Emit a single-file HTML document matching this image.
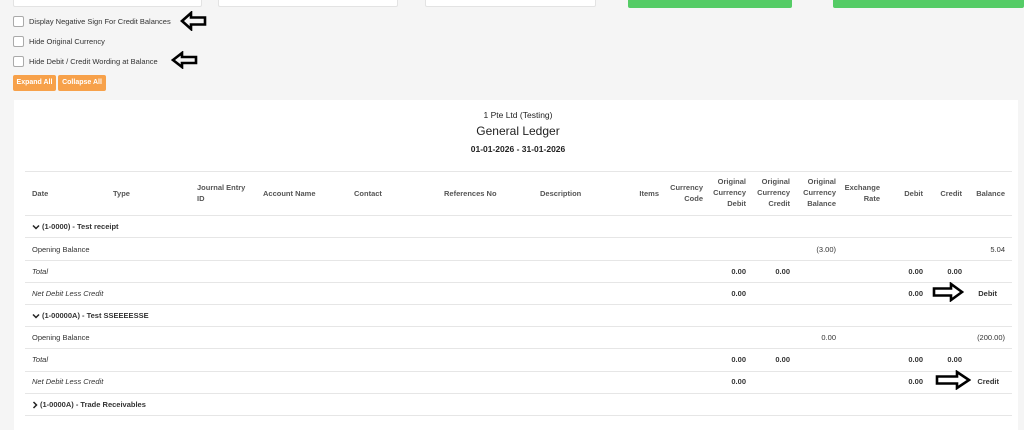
<!DOCTYPE html>
<html><head><meta charset="utf-8"><style>
*{margin:0;padding:0;box-sizing:border-box}
body{width:1024px;height:419px;overflow:hidden;background:#f5f5f5;font-family:"Liberation Sans",sans-serif;font-size:7.5px;color:#333;position:relative}
.a{position:absolute;white-space:nowrap}
.r{position:absolute;width:100px;text-align:right;white-space:nowrap}
.b{font-weight:bold}
.i{font-style:italic}
.h{color:#555;font-weight:bold;line-height:11px}
.ln{position:absolute;left:25px;width:987px;height:1px;background:#e6e6e6}
.cb{position:absolute;left:13px;width:11px;height:11px;border:1px solid #aaa;border-radius:2px;background:#fff}
.btn{position:absolute;top:75px;height:16px;background:#f7a14a;color:#fff;font-size:7px;font-weight:bold;line-height:16px;text-align:center;border-radius:2px}
.chev{display:inline-block;vertical-align:middle;margin-right:2px}
</style></head><body>
<div class="a" style="left:13px;top:-6px;width:189px;height:13px;background:#fff;border:1px solid #e3e3e3;border-radius:2px"></div>
<div class="a" style="left:218px;top:-6px;width:180px;height:13px;background:#fff;border:1px solid #e3e3e3;border-radius:2px"></div>
<div class="a" style="left:425px;top:-6px;width:171px;height:13px;background:#fff;border:1px solid #e3e3e3;border-radius:2px"></div>
<div class="a" style="left:628px;top:-4px;width:164px;height:12px;background:#55cc66;border-radius:2px"></div>
<div class="a" style="left:833px;top:-4px;width:191px;height:12px;background:#55cc66;border-radius:2px"></div>

<div class="cb" style="top:16px"></div><div class="a" style="left:29px;top:17px;font-size:7.5px">Display Negative Sign For Credit Balances</div>
<div class="cb" style="top:36px"></div><div class="a" style="left:29px;top:37px">Hide Original Currency</div>
<div class="cb" style="top:56px"></div><div class="a" style="left:29px;top:57px">Hide Debit / Credit Wording at Balance</div>
<svg class="a" style="left:180px;top:11px" width="27" height="20" viewBox="0 0 27 20"><path d="M2 10 L11 2 L11 6.5 L25 6.5 L25 13.5 L11 13.5 L11 18 Z" fill="none" stroke="#000" stroke-width="2.6"/></svg>
<svg class="a" style="left:171px;top:51px" width="27" height="18" viewBox="0 0 27 18"><path d="M2 9 L11 2 L11 6 L25 6 L25 12 L11 12 L11 16 Z" fill="none" stroke="#000" stroke-width="2.6"/></svg>
<div class="btn" style="left:13px;width:43px">Expand All</div>
<div class="btn" style="left:58px;width:48px">Collapse All</div>

<div class="a" style="left:14px;top:100px;width:1004px;height:330px;background:#fff"></div>
<div class="a" style="left:0;width:1036px;text-align:center;top:110px;font-size:8.5px;color:#222">1 Pte Ltd (Testing)</div>
<div class="a" style="left:0;width:1036px;text-align:center;top:124px;font-size:12px;color:#222">General Ledger</div>
<div class="a" style="left:0;width:1036px;text-align:center;top:144px;font-size:8.5px;color:#222;font-weight:bold">01-01-2026 - 31-01-2026</div>

<div class="ln" style="top:171px"></div>
<div class="a h" style="left:32px;top:188px">Date</div>
<div class="a h" style="left:113px;top:188px">Type</div>
<div class="a h" style="left:197px;top:182px">Journal Entry<br>ID</div>
<div class="a h" style="left:263px;top:188px">Account Name</div>
<div class="a h" style="left:354px;top:188px">Contact</div>
<div class="a h" style="left:444px;top:188px">References No</div>
<div class="a h" style="left:540px;top:188px">Description</div>
<div class="r h" style="left:559px;top:188px">Items</div>
<div class="r h" style="left:603px;top:182px">Currency<br>Code</div>
<div class="r h" style="left:646px;top:176px">Original<br>Currency<br>Debit</div>
<div class="r h" style="left:690px;top:176px">Original<br>Currency<br>Credit</div>
<div class="r h" style="left:736px;top:176px">Original<br>Currency<br>Balance</div>
<div class="r h" style="left:780px;top:182px">Exchange<br>Rate</div>
<div class="r h" style="left:823px;top:188px">Debit</div>
<div class="r h" style="left:862px;top:188px">Credit</div>
<div class="r h" style="left:905px;top:188px">Balance</div>

<div class="ln" style="top:215px"></div>
<div class="a b" style="left:32px;top:222px"><svg class="chev" width="8" height="6" viewBox="0 0 8 6"><path d="M1 1.5 L4 4.5 L7 1.5" fill="none" stroke="#222" stroke-width="1.5"/></svg>(1-0000) - Test receipt</div>
<div class="ln" style="top:237px"></div>
<div class="a" style="left:32px;top:245px">Opening Balance</div>
<div class="r" style="left:736px;top:245px">(3.00)</div>
<div class="r" style="left:905px;top:245px">5.04</div>
<div class="ln" style="top:260px"></div>
<div class="a i" style="left:32px;top:267px">Total</div>
<div class="r b" style="left:646px;top:267px">0.00</div>
<div class="r b" style="left:690px;top:267px">0.00</div>
<div class="r b" style="left:823px;top:267px">0.00</div>
<div class="r b" style="left:862px;top:267px">0.00</div>
<div class="ln" style="top:282px"></div>
<div class="a i" style="left:32px;top:289px">Net Debit Less Credit</div>
<div class="r b" style="left:646px;top:289px">0.00</div>
<div class="r b" style="left:823px;top:289px">0.00</div>
<div class="r b" style="left:897px;top:289px">Debit</div>
<svg class="a" style="left:932px;top:282px" width="32" height="20" viewBox="0 0 32 20"><path d="M2 6.5 L19 6.5 L19 2 L30 10 L19 18 L19 13.5 L2 13.5 Z" fill="none" stroke="#000" stroke-width="2.6"/></svg>
<div class="ln" style="top:304px"></div>
<div class="a b" style="left:32px;top:311px"><svg class="chev" width="8" height="6" viewBox="0 0 8 6"><path d="M1 1.5 L4 4.5 L7 1.5" fill="none" stroke="#222" stroke-width="1.5"/></svg>(1-00000A) - Test SSEEEESSE</div>
<div class="ln" style="top:326px"></div>
<div class="a" style="left:32px;top:333px">Opening Balance</div>
<div class="r" style="left:736px;top:333px">0.00</div>
<div class="r" style="left:905px;top:333px">(200.00)</div>
<div class="ln" style="top:348px"></div>
<div class="a i" style="left:32px;top:355px">Total</div>
<div class="r b" style="left:646px;top:355px">0.00</div>
<div class="r b" style="left:690px;top:355px">0.00</div>
<div class="r b" style="left:823px;top:355px">0.00</div>
<div class="r b" style="left:862px;top:355px">0.00</div>
<div class="ln" style="top:371px"></div>
<div class="a i" style="left:32px;top:377px">Net Debit Less Credit</div>
<div class="r b" style="left:646px;top:377px">0.00</div>
<div class="r b" style="left:823px;top:377px">0.00</div>
<div class="r b" style="left:899px;top:377px">Credit</div>
<svg class="a" style="left:935px;top:370px" width="36" height="20" viewBox="0 0 36 20"><path d="M2 6.5 L22 6.5 L22 2 L34 10 L22 18 L22 13.5 L2 13.5 Z" fill="none" stroke="#000" stroke-width="2.6"/></svg>
<div class="ln" style="top:393px"></div>
<div class="a b" style="left:32px;top:400px"><svg class="chev" width="6" height="8" viewBox="0 0 6 8"><path d="M1.5 1 L4.5 4 L1.5 7" fill="none" stroke="#222" stroke-width="1.5"/></svg>(1-0000A) - Trade Receivables</div>
<div class="ln" style="top:415px"></div>
</body></html>
